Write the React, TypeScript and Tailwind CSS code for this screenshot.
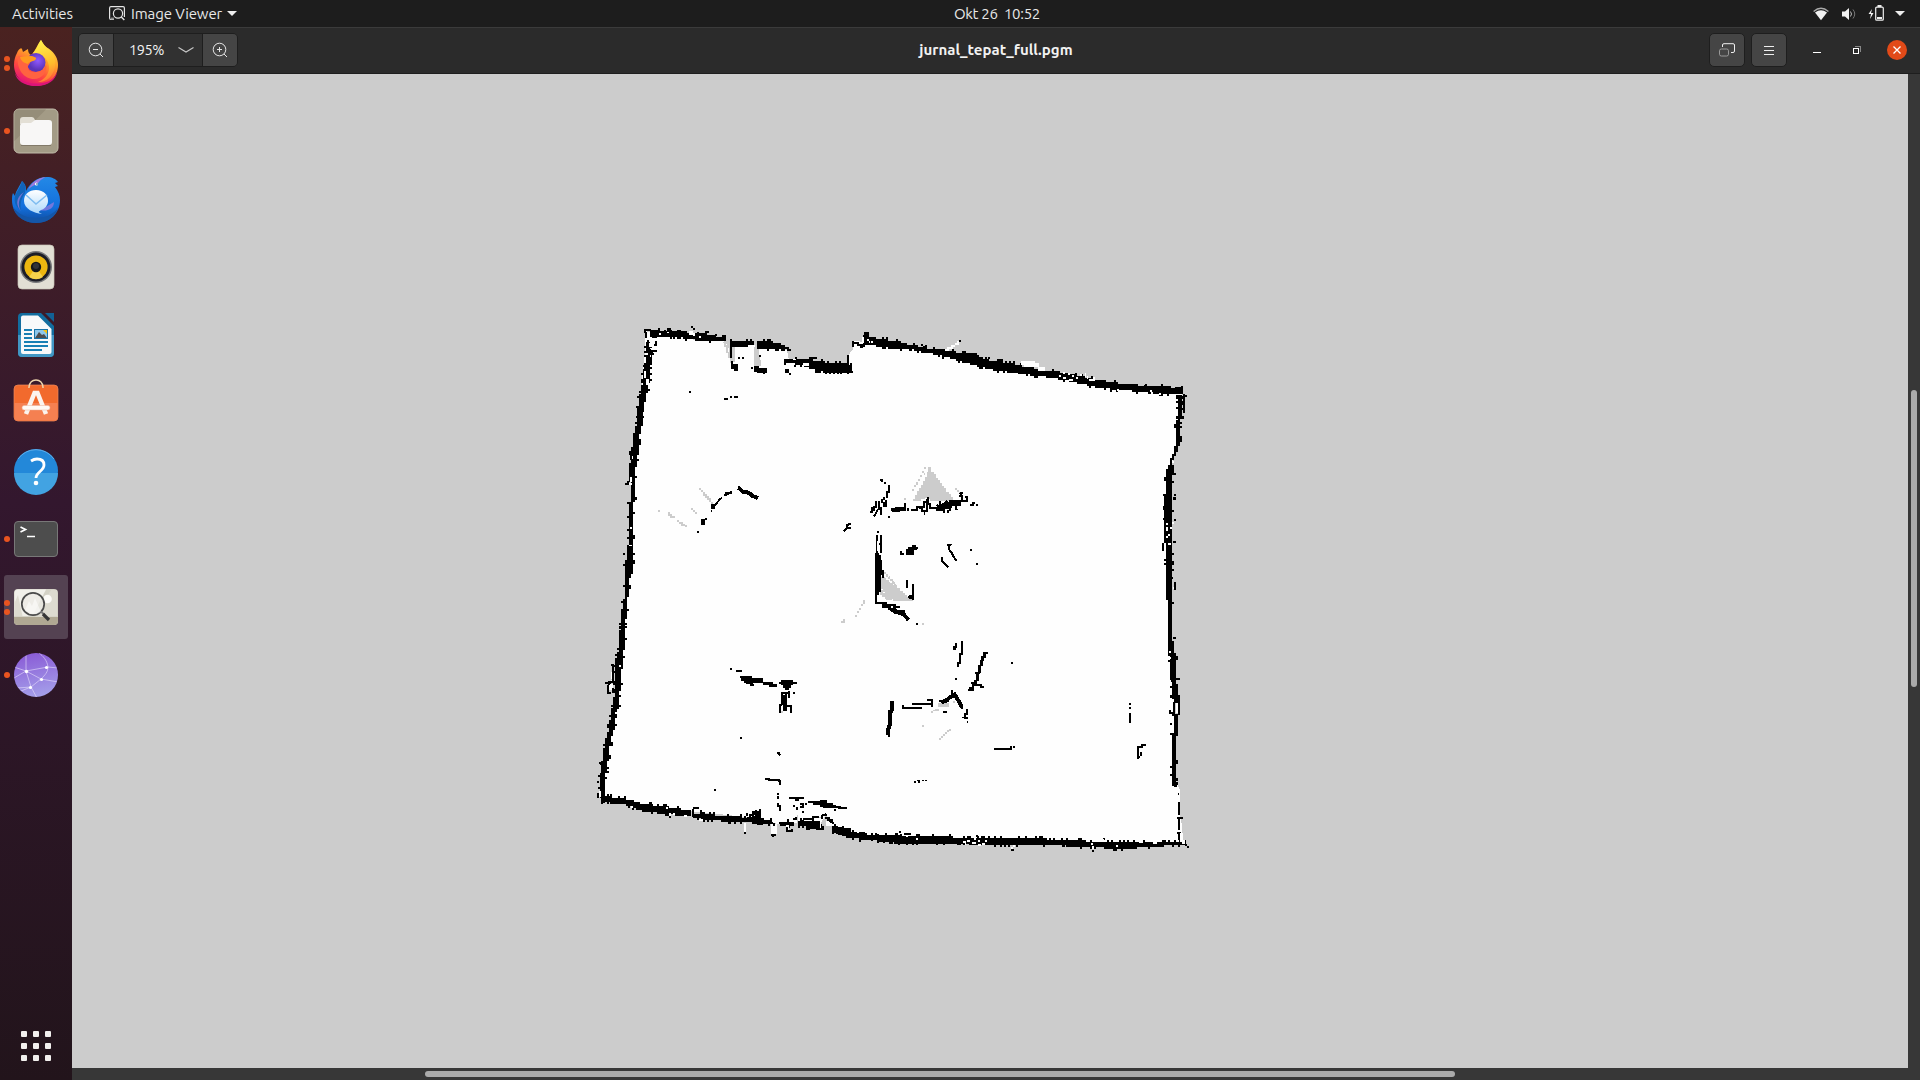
import React from "react";

type Band = number[][];

// Deterministic noise so that the scanned walls keep the same ragged edge.
function noise(n: number) {
  const v = Math.sin(n * 127.1 + 11.7) * 43758.5453;
  return v - Math.floor(v);
}

const CELL = 5.86;

// Each band row is [position, near edge, far edge]; cells are snapped to the occupancy grid.
function bandPath(rows: Band, vertical: boolean, rough = 0.26) {
  let d = "";
  const first = rows[0][0];
  const last = rows[rows.length - 1][0];
  let i = 0;
  for (let p = first; p < last; p += CELL) {
    while (i < rows.length - 2 && p > rows[i + 1][0]) i++;
    const a = rows[i];
    const b = rows[i + 1];
    const t = (p - a[0]) / (b[0] - a[0]);
    let lo = Math.floor((a[1] + (b[1] - a[1]) * t) / CELL + 0.3) * CELL;
    let hi = Math.ceil((a[2] + (b[2] - a[2]) * t) / CELL - 0.3) * CELL;
    const seed = p + first * 3 + a[1];
    if (noise(seed) < rough) lo -= CELL;
    if (noise(seed + 5) < rough) hi += CELL;
    if (hi - lo < CELL) hi = lo + CELL;
    const q = p + CELL + 0.2;
    d += vertical
      ? `M${lo} ${p}H${hi}V${q}H${lo}Z`
      : `M${p} ${lo}H${q}V${hi}H${p}Z`;
  }
  return d;
}

function cells(list: number[][]) {
  return list.map(([x, y, w = 6, h = 6]) => `M${x} ${y}h${w}v${h}h${-w}z`).join("");
}

interface TileProps {
  x: number;
  y: number;
  h?: Band[];
  v?: Band[];
  rough?: number;
  grey?: string;
  greyCells?: number[][];
  white?: number[][];
  black?: number[][];
  line?: string;
  thick?: string;
}

function Tile({ x, y, h = [], v = [], rough, grey, greyCells, white, black, line, thick }: TileProps) {
  return (
    <g transform={`translate(${x} ${y}) scale(0.33333)`} fill="none">
      {grey && <path d={grey} fill="#cccccc" />}
      {greyCells && <path d={cells(greyCells)} fill="#cccccc" />}
      {h.map((b, i) => <path key={`h${i}`} d={bandPath(b, false, rough)} fill="#000" />)}
      {v.map((b, i) => <path key={`v${i}`} d={bandPath(b, true, rough === undefined ? 0.14 : rough)} fill="#000" />)}
      {white && <path d={cells(white)} fill="#fefefe" />}
      {line && <path d={line} stroke="#000" strokeWidth="6" />}
      {thick && <path d={thick} stroke="#000" strokeWidth="12" />}
      {black && <path d={cells(black)} fill="#000" />}
    </g>
  );
}

function OccupancyMap() {
  return (
    <svg viewBox="72 74 1836 994" className="block h-full w-full" shapeRendering="crispEdges">
      <polygon
        fill="#fefefe"
        points="645,331 656,334 696,340 723,341 728,346 732,362 735,362 735,344 755,345 758,364 761,364 758,346 787,350 789,360 813,366 846,366 850,352 853,350 854,341 865,342 945,352 1020,367 1040,374 1110,387 1182,391 1179,430 1172,466 1168,500 1168,560 1170,640 1175,710 1175,780 1180,790 1180,840 1184,843 1000,842 880,837 850,834 836,827 826,815 820,824 800,822 790,824 778,824 745,817 700,812 650,807 602,797 608,740 618,690 628,560 633,480 640,400 645,350"
      />
      <Tile
        x={580} y={310}
        h={[
          [[210, 62, 80], [270, 64, 82], [330, 70, 88], [390, 76, 92], [434, 86, 95]],
          [[450, 96, 114], [480, 92, 108], [520, 98, 106]],
          [[532, 96, 114], [560, 94, 117], [600, 104, 116], [627, 116, 121]],
          [[612, 146, 156], [660, 150, 164], [690, 148, 170], [705, 152, 178], [740, 158, 186], [800, 162, 184], [812, 168, 178]],
          [[848, 82, 102], [875, 88, 106], [900, 88, 104], [960, 98, 114]],
        ]}
        v={[
          [[95, 198, 212], [150, 200, 214], [180, 190, 210], [235, 184, 204], [260, 177, 196], [340, 169, 184], [360, 163, 178], [440, 152, 171], [490, 147, 162], [525, 154, 162], [560, 155, 163], [572, 150, 160], [690, 146, 158], [740, 140, 156], [785, 138, 154]],
        ]}
        grey="M430 95H438V105H444V125H450V140H456V158H450V145H444V130H438V110H432ZM522 110H532V120H538V150H543V168H522Z"
        greyCells={[[356, 534], [362, 540], [368, 546], [368, 552], [374, 552], [374, 558], [380, 558], [380, 564], [386, 564], [386, 570], [392, 576], [392, 582], [234, 600], [264, 606], [264, 612], [270, 612], [270, 618, 14], [292, 630], [298, 636, 12], [304, 642, 12], [316, 646], [332, 594], [338, 600], [344, 606]]}
        white={[[198, 66, 12, 20], [220, 80], [238, 68], [262, 64], [240, 80, 12], [328, 62, 12, 12], [340, 68, 6, 10], [356, 78], [302, 80], [206, 98, 12, 12], [214, 114], [198, 128], [192, 182, 6, 22], [198, 208, 8, 18], [206, 134, 8], [154, 438, 6, 8], [150, 500, 7, 16], [146, 520, 10, 4], [150, 652], [148, 705, 8, 4], [866, 92, 20, 6], [870, 98, 6, 6], [628, 158, 16, 6], [670, 160, 16, 8], [640, 146, 8, 4]]}
        line="M192 60H214M194 60V68M198 66V84M216 82H230M228 94V104H222M230 124H216V132H206V150M204 90V112M192 206V234M454 118V144M456 152V164M400 590L420 568L427 562M432 554H438V548H454V542M444 546V556M820 92V112M820 100H838M830 106H850M840 112H850M904 508V514M912 520H918M926 524V545H920V565M912 560V570M906 566V580M898 572V600M888 572V590H882V604M876 590V610M870 606H876M894 598L882 620M902 590V616M918 570V592M912 576V590M790 664L800 654V646L812 640M800 654H812M894 664V668M892 676V730M904 676V730M892 702H906"
        thick="M858 66V86M400 582V598M476 534L490 546L506 548L518 558L534 564M891 732V780M897 735V780M936 600H960"
        black={[[334, 48], [340, 54], [234, 54], [260, 54, 12, 12], [350, 66], [382, 64], [406, 72], [454, 162, 20, 14], [462, 174, 12, 8], [474, 142], [486, 142], [512, 170], [536, 135], [523, 168, 14, 18], [532, 174, 28, 14], [548, 186, 8], [616, 178, 12, 10], [626, 188], [646, 140], [686, 142, 24, 6], [800, 136, 6, 24], [808, 184, 10], [780, 186], [854, 66, 12, 20], [848, 74], [328, 243], [432, 264, 12], [450, 259], [462, 259, 12], [362, 626, 12, 18], [374, 624], [351, 663], [392, 600, 5], [176, 244], [168, 288], [168, 318], [134, 518, 12], [142, 512, 6], [156, 552, 10], [160, 560, 12], [130, 730], [924, 618], [474, 529], [150, 430, 6, 20]]}
      />
      <Tile
        x={840} y={310}
        h={[
          [[90, 88, 104], [130, 92, 112], [200, 104, 118], [260, 116, 128], [320, 122, 140], [360, 130, 152], [400, 136, 164], [450, 152, 175], [500, 158, 184], [560, 172, 192], [610, 180, 200], [680, 190, 212], [760, 210, 230], [840, 222, 240], [900, 228, 244], [960, 232, 250], [1024, 236, 252]],
        ]}
        v={[
          [[255, 1015, 1022], [310, 1015, 1022], [345, 1010, 1020], [392, 1010, 1019]],
        ]}
        rough={0.2}
        grey="M264 472H274V486H282V492H288V504H294V510H300V520H306V528H312V534H318V545H326V552H332V562H338V574H270V568H264V564H254V568H244V574H218V566H224V556H230V544H236V534H242V524H248V512H254V500H260V486H264Z"
        greyCells={[[252, 472], [246, 484], [252, 490, 4], [234, 508], [240, 496], [228, 516, 5, 8], [222, 524], [216, 536], [192, 564], [344, 534], [350, 540], [358, 546]]}
        white={[[316, 116, 12], [322, 110, 18], [332, 104, 14], [344, 98, 12], [352, 94, 6, 8], [544, 154, 42, 12], [552, 166, 26, 6], [570, 160, 28, 10], [594, 170, 20, 14], [734, 190, 5, 10], [740, 198, 5, 9], [760, 202, 5, 10], [670, 186], [656, 196], [684, 190], [696, 196], [720, 192], [668, 202, 10], [688, 208, 10], [708, 202], [748, 206, 10], [80, 88, 8], [92, 94], [76, 104, 10], [66, 80, 6, 18], [830, 236], [918, 246], [930, 240], [958, 248], [216, 116]]}
        line="M1020 262H1034M1032 252V310M1020 282H1032M1020 296H1034M156 602V596H178M178 590V604M170 596H198M196 580V604M204 594V604M212 600H232V592H246V602H262V566M240 596V590H252V576H264V584M270 580V594H290V600H312V610M290 584L304 594H330V602M300 574L302 588L320 574L326 592L342 580M326 572H366V560L360 548M344 580L350 600M360 574H382V560H376M390 584H400V578H406"
        thick="M305 588H335M328 582H362M292 592H316M312 582H330M166 598H192"
        black={[[244, 102], [228, 104], [250, 108, 10], [358, 90], [380, 128, 26, 8], [444, 142], [508, 154], [654, 184], [792, 212], [870, 222, 20, 8], [912, 224], [984, 228], [1006, 232, 16], [1032, 254, 9], [364, 546], [358, 554, 10], [408, 582], [252, 602, 4, 14], [322, 600, 6, 10], [144, 618], [124, 508, 4, 8], [260, 560, 6, 12], [390, 716], [180, 722, 6, 10], [184, 728, 8], [198, 718, 24, 12], [204, 712, 26], [216, 706, 12], [226, 710, 8], [204, 728, 10]]}
      />
      <Tile
        x={1100} y={440}
        v={[
          [[0, 229, 239], [28, 224, 234], [56, 212, 218]],
          [[75, 204, 219], [135, 199, 218], [215, 194, 218], [295, 195, 216], [310, 199, 215], [400, 199, 215], [460, 201, 215], [485, 205, 215], [600, 206, 218], [620, 208, 224], [680, 211, 226], [725, 216, 230], [785, 222, 234]],
          [[822, 223, 234], [884, 222, 233]],
          [[884, 217, 228], [1035, 217, 228]],
        ]}
        rough={0.08}
        white={[[216, 64, 7, 6], [198, 260, 6, 14], [210, 260, 6, 8], [198, 288], [204, 282], [204, 310, 10], [198, 250, 5], [216, 246], [218, 440], [206, 632], [206, 650], [228, 790, 6, 28], [234, 1046, 7, 22], [238, 1130, 5, 26], [240, 1148, 6, 30], [234, 1078, 4]]}
        line="M222 785V825M237 765V825M230 770H240M210 810V820H218M90 789V795M90 801V807M90 820V849M114 958V922H126V916H137M124 936V948M118 948V954M212 58V75M189 310V332M237 1085V1125M237 1130V1170M232 1135H248M237 1178V1200M230 1180H244M243 1188V1196"
        black={[[222, 98], [222, 162], [218, 172, 10, 8], [222, 238], [220, 302, 8], [216, 340], [216, 370], [214, 410], [222, 426, 6, 24], [198, 474, 12], [210, 486, 12], [218, 590, 10], [204, 614], [204, 660, 12], [220, 654, 14], [226, 714, 14], [212, 720], [210, 850], [210, 879, 14], [228, 1014, 6, 8], [228, 1026, 6, 8], [222, 1036, 10], [234, 1058], [9, 1194]]}
      />
      <Tile
        x={580} y={560}
        h={[
          [[62, 710, 726], [130, 717, 732], [190, 734, 752], [260, 742, 760], [330, 754, 767]],
          [[340, 762, 772], [372, 764, 777], [440, 768, 783], [500, 773, 785], [540, 776, 792], [575, 785, 790]],
          [[600, 784, 794], [640, 784, 794]],
          [[660, 782, 795], [690, 788, 804], [725, 796, 805]],
          [[756, 798, 813], [780, 804, 824], [830, 822, 833], [890, 827, 840], [925, 825, 844], [960, 825, 846]],
        ]}
        v={[
          [[0, 137, 151], [95, 136, 144], [150, 126, 137], [260, 118, 132], [290, 111, 127], [325, 108, 123], [420, 103, 117], [455, 95, 107], [510, 87, 100], [535, 78, 92], [590, 72, 85], [645, 61, 77], [712, 59, 75]],
        ]}
        rough={0.17}
        grey="M904 50H914V60H924V66H930V74H940V84H950V90H960V124H938V118H926V112H920V104H914V96H908V88H902V60Z"
        greyCells={[[910, 36], [918, 42, 5, 9], [924, 52], [930, 58], [936, 64], [942, 72], [906, 106, 18], [914, 112, 22], [848, 120, 6, 12], [843, 132], [837, 144], [831, 153], [825, 165], [783, 182, 12], [789, 177], [597, 453, 12], [650, 765, 4, 30], [714, 772, 10, 36], [706, 786, 8, 16]]}
        white={[[94, 336, 6, 20], [88, 372, 12, 18], [94, 360], [118, 316], [492, 788, 5, 28], [573, 792, 18, 30], [618, 794, 8, 16], [654, 768, 6, 20], [356, 778, 12], [268, 758, 5, 12], [258, 742], [278, 758], [312, 764, 8], [714, 774, 10, 30], [340, 748, 12, 8], [500, 768], [512, 762], [154, 738], [58, 694, 5, 16], [738, 784, 24, 14]]}
        line="M98 312V365H88V375M76 369H92M84 375V398H92M102 362V372M98 385V400M888 0V128H920M902 0V45M908 30V54M910 140H930V146H945M920 134H946M925 148H945V158H960M600 458V436H606M608 400H624M626 392V415M620 438H632V458M592 580H597L600 586M555 657H566V661H596V664H600V674M594 699V705M594 708V716M594 729V742M600 736V752M628 714H672M646 720H656M684 726H740M700 732H760M722 720V740M720 738H736M740 738L758 736L780 744H800M642 734V740M660 732H668V742H660M652 742V750M666 755H672M340 744H356M340 746V768H350M364 770V750M486 780H510V764H520V780M530 764H540V748M500 758V768M528 750V772M598 790H625V778M620 800V814H636V806M608 788H640M640 778H648V772M656 784V800M668 778H700V772H716M728 766L740 762M736 774H748L750 784L762 790M725 766V778M574 826H588M580 828V832M582 790V798M765 812H800V806H812M776 800V824"
        thick="M516 760H536V792M500 776H530V784M530 788H548M668 790H720M680 800H720M936 424V450M930 450V494M762 806H780"
        black={[[484, 348, 32, 16], [480, 348], [492, 360, 32, 8], [498, 366, 20, 6], [516, 354, 34, 16], [548, 366, 30, 9], [566, 372, 26, 9], [598, 366, 53], [602, 360, 38, 16], [608, 374, 26, 10], [614, 383, 14, 6], [603, 406, 18, 30], [598, 434, 6, 12], [608, 436, 13, 17], [604, 396, 5, 8], [614, 402, 6, 6], [450, 323], [468, 329, 18, 6], [510, 372, 12], [639, 396], [480, 531], [402, 686], [918, 504, 6, 20], [924, 524], [94, 312], [118, 188], [116, 200], [86, 464], [70, 552], [70, 564], [56, 606, 12], [52, 662, 6], [52, 700, 6, 14], [66, 724, 10], [156, 744], [268, 768], [382, 778], [394, 778], [492, 816], [576, 822, 12, 6], [654, 798], [942, 846], [910, 842], [666, 754], [676, 730]]}
      />
      <Tile
        x={840} y={540}
        grey="M134 110H128V142H140V154H150V166H162V176H174V184H220V178H208V172H202V166H194V160H188V152H180V144H172V136H158V128H148V120H140ZM120 150H130V160H138V168H148V176H156V180H138V172H130V166H120ZM296 488H326V502H292ZM274 512H298V506H286V510H280V518H274Z"
        greyCells={[[134, 96, 5], [140, 102, 5], [146, 108, 5, 8], [152, 118, 8], [160, 126], [68, 180, 6, 12], [56, 204], [51, 214], [45, 225], [3, 242, 12], [9, 237], [246, 249], [246, 555], [297, 594], [303, 588], [309, 583], [315, 577], [321, 571], [327, 566], [340, 484, 4]]}
        line="M201 120V143M219 132V180M204 172H220M106 188H128L132 194H168M128 192V202H142M150 208H162M160 200H180M322 14H332L326 20L330 34L336 40L342 52L350 62M305 52V62L312 68L318 76L325 82M366 303V342H360V370H354V382M342 330V320H348V310M393 430H400V436H424V441H432M384 450H398V432M216 491H280M188 496V504H246M264 480H280M276 478V500M310 516H320M382 508V522H376V535H384M370 530V534M336 450V468M462 627H512V618M296 482H310"
        thick="M111 40V165M117 45V155M208 172H220M152 208L168 214L192 224L206 240M174 216H194M386 448H396M155 484V512L150 520V552L144 570V584M304 488L318 482L330 472L344 464L354 480L366 502M310 484L326 478"
        white={[[112, 4, 5, 30], [111, 56, 5, 18]]}
        black={[[430, 337, 13], [430, 343, 7, 12], [424, 349, 8, 14], [420, 360, 9, 18], [414, 374, 9, 24], [404, 396, 15, 6], [408, 402, 8, 20], [403, 420, 8, 16], [390, 27], [408, 69], [128, 90, 4, 24], [180, 34, 6, 12], [184, 39, 8], [198, 34, 24, 11], [210, 24, 20], [216, 16, 12], [228, 249], [345, 414], [513, 366], [144, 586], [261, 477], [519, 619], [381, 543, 4], [338, 324, 10], [362, 496, 8, 11]]}
      />
      <Tile
        x={820} y={740}
        h={[
          [[36, 262, 274], [62, 266, 284], [85, 281, 292], [150, 287, 298], [200, 288, 306], [280, 288, 308], [420, 292, 309], [500, 296, 316], [600, 296, 316], [740, 298, 318], [800, 304, 322], [900, 305, 326], [1000, 308, 322], [1040, 308, 317], [1092, 307, 315]],
        ]}
        rough={0.24}
        white={[[258, 284], [274, 282], [288, 294], [428, 302, 10], [442, 300, 8], [456, 306, 12], [462, 294], [474, 300], [486, 308, 10], [474, 312, 8], [496, 300], [434, 310, 5], [574, 320], [580, 314], [816, 318, 5, 10], [848, 296, 5, 9], [812, 308], [958, 302, 12], [1000, 306, 10], [888, 314], [1080, 280, 8, 24], [1086, 300, 8, 12], [1070, 300, 8], [1076, 150, 5, 16]]}
        black={[[252, 278, 20, 6], [228, 278], [238, 274], [468, 284], [484, 288, 12], [816, 330], [574, 326, 8], [1096, 312], [1101, 318], [282, 124, 6, 5], [290, 121, 10, 3], [294, 124, 6, 5], [306, 120, 5, 3], [314, 120, 7, 3], [20, 238, 18], [42, 206]]}
        line="M0 196H24V202H60V204H80M8 226H22M60 266H92"
        thick="M0 186H14V198H28M36 268H72M50 276H92"
      />
    </svg>
  );
}

function FirefoxIcon() {
  return (
    <svg viewBox="0 0 48 48" className="h-12 w-12">
      <defs>
        <linearGradient id="fx" x1=".8" y1="0" x2=".3" y2="1">
          <stop offset="0" stopColor="#ffe94a" /><stop offset=".4" stopColor="#ffa028" />
          <stop offset=".7" stopColor="#ff4a3f" /><stop offset="1" stopColor="#e00c7c" />
        </linearGradient>
        <linearGradient id="fy" x1=".5" y1="0" x2=".7" y2="1">
          <stop offset="0" stopColor="#fff04a" /><stop offset=".6" stopColor="#ffbb2c" /><stop offset="1" stopColor="#ff7139" />
        </linearGradient>
        <radialGradient id="fp" cx=".6" cy=".4"><stop offset="0" stopColor="#9059ff" /><stop offset="1" stopColor="#5a34b8" /></radialGradient>
      </defs>
      <path d="M5 14C6 11 9 8 10 10l1 3 5-3c0 3 1 5 3 6 4-3 6-10 10-15 2 3 4 7 8 9 6 4 9 10 9 16 0 12-9 21-22 21S2 37 2 26c0-5 1-8 3-12z" fill="url(#fx)" />
      <path d="M29 1c2 4 4 7 8 9l3 4c5 7 4 17-1 23-3 4-8 6-13 6 11-4 14-15 8-23-4-5-12-5-13-6 4-4 5-9 8-13z" fill="url(#fy)" />
      <circle cx="24" cy="23.500" r="9.500" fill="url(#fp)" />
      <path d="M6 17l11 2c3 3 1 5-1 8-1 4 3 7 8 6 5 0 9-3 10-8 2 8-4 15-12 15-10 0-18-10-16-23z" fill="#ff6340" />
      <path d="M8 18l10-1c4 0 7 2 6 3-2 3-7 2-8 5-4-1-7-3-8-7z" fill="#ff9a1f" />
      <path d="M3 34c4 8 12 10.500 21 10.500s18-2.500 21-11.500c-1 8-9 14-21 14S4 41 3 34z" fill="#dc1479" />
    </svg>
  );
}

function FilesIcon() {
  return (
    <svg viewBox="0 0 48 48" className="h-12 w-12">
      <rect x="2" y="2" width="44" height="44" rx="5" fill="#a39b86" stroke="#c0bba9" strokeWidth="1" />
      <path d="M2.500 34L34 2.500H7Q2.500 2.500 2.500 7z" fill="#958d79" />
      <path d="M8 13q0-3 3-3h9q2 0 3 3l1 4H8z" fill="#e3dfd5" />
      <path d="M8 19q0-3 3-3h8l4-3h14q3 0 3 3v19q0 3-3 3H11q-3 0-3-3z" fill="#f8f7f6" />
      <path d="M9 38.500H39" stroke="#827a69" strokeWidth="1" />
    </svg>
  );
}

function ThunderbirdIcon() {
  return (
    <svg viewBox="0 0 48 48" className="h-12 w-12">
      <defs>
        <linearGradient id="tb" x1=".5" y1="0" x2=".5" y2="1"><stop offset="0" stopColor="#2489e6" /><stop offset=".65" stopColor="#126fdc" /><stop offset="1" stopColor="#114c9e" /></linearGradient>
        <linearGradient id="te" x1=".5" y1="0" x2=".5" y2="1"><stop offset="0" stopColor="#fff" /><stop offset="1" stopColor="#acd8fb" /></linearGradient>
      </defs>
      <path d="M10 6c4 4 4 6 4 10 4-8 11-14 21-14 5 0 9 2 11 5l-3 1 3 3-3 1c3 4 5 8 5 13 0 13-10 23-24 23S0 38 0 25c0-2 0-5 1-7l2 3C4 15 8 11 10 6z" fill="url(#tb)" />
      <path d="M10 6c4 4 4 7 3 12-4 6-5 11-4 17C3 32 2 26 3 21c2-5 6-10 7-15z" fill="#1163b8" />
      <path d="M16 15C19 8 25 3 34 2c-4 2-6 3-7 5-2 3-7 3-11 8z" fill="#9d7bdf" />
      <path d="M12 17c-5 6-7 13-3 19-5-5-6-13 3-19z" fill="#9a7ae0" opacity=".7" />
      <path d="M1 32c6 8 14 11 23 11 8 0 17-3 22-10-3 10-12 15-22 15S3 42 1 32z" fill="#1456a8" />
      <path d="M42 27c0 7-7 10-15 8l5-2z" fill="#7278dc" />
      <circle cx="24.500" cy="9" r="1.600" fill="#fff" /><circle cx="25" cy="9" r=".8" fill="#154a80" />
      <path d="M24 15c8 0 12 5 12 11 0 4-3 8-7 9-3 2-3 2 1 4-8-1-18-5-18-13 0-7 5-11 12-11z" fill="url(#te)" />
      <path d="M14 20l10 9 11-9" fill="none" stroke="#7ebcf0" strokeWidth="1.500" />
    </svg>
  );
}

function RhythmboxIcon() {
  return (
    <svg viewBox="0 0 48 48" className="h-12 w-12">
      <rect x="6" y="2" width="36" height="44" rx="4" fill="#e2dfd4" stroke="#c9c5b8" strokeWidth=".7" />
      <circle cx="24" cy="24" r="16" fill="#77787a" /><circle cx="24" cy="24" r="14.500" fill="#1c1d26" />
      <circle cx="24" cy="24" r="11.600" fill="#ecb610" /><path d="M24 24L17 34a12 12 0 0 0 14 0z" fill="#f5d14b" />
      <circle cx="24" cy="24" r="5.200" fill="#15161a" /><circle cx="24" cy="23" r="3" fill="#303238" />
    </svg>
  );
}

function WriterIcon() {
  return (
    <svg viewBox="0 0 48 48" className="h-12 w-12">
      <path d="M10 2h19l13 13v27q0 4-4 4H10q-4 0-4-4V6q0-4 4-4z" fill="#126d9f" />
      <path d="M6 24H42V42q0 4-4 4H10q-4 0-4-4z" fill="#4197c4" />
      <path d="M33 2h9v9z" fill="#126195" />
      <path d="M11 4.500H26L39.500 18V41q0 2-2 2H11q-2 0-2-2V6.500q0-2 2-2z" fill="#f8f9fa" />
      <path d="M12 19h8M12 23h8M12 27h8M12 31h24M12 35h24M12 39h18" stroke="#187fb4" strokeWidth="2" />
      <rect x="22.500" y="18.500" width="13" height="9" fill="#8dc7ec" stroke="#1873a8" />
      <path d="M23 27l4-6 3 3 2-1 3 4z" fill="#4c4d4f" /><path d="M31 19h4v4z" fill="#f5c211" />
    </svg>
  );
}

function SoftwareIcon() {
  return (
    <svg viewBox="0 4 48 48" className="h-12 w-12">
      <rect x="2" y="10" width="44" height="36" rx="4" fill="#f26a2d" stroke="#ef895c" strokeWidth=".7" />
      <path d="M2.500 28h43v14q0 3.500-3.500 3.500H6q-3.500 0-3.500-3.500z" fill="#f58051" />
      <path d="M17 13v-1q1-7 7-7t7 7v1" stroke="#efd6ad" strokeWidth="1.500" fill="none" />
      <path d="M14 39l8.500-21h3L34 39" fill="none" stroke="#fbf4ef" strokeWidth="4.500" />
      <rect x="10" y="30.500" width="28" height="4.500" rx="2.200" fill="#fffaf6" stroke="#e9b39b" strokeWidth=".5" />
    </svg>
  );
}

function HelpIcon() {
  return (
    <svg viewBox="0 0 48 48" className="h-12 w-12">
      <circle cx="24" cy="24" r="22" fill="#2388d9" /><path d="M2 26a22 22 0 0 0 44 0z" fill="#42a3e2" />
      <path d="M6 12a22 22 0 0 1 36 0" fill="none" stroke="#6db9f0" strokeWidth=".8" />
      <path d="M19 14q3-2 6-2 7 0 7 6 0 3-4 6.500-4 3.500-4 6.500" fill="none" stroke="#fff" strokeWidth="2.800" />
      <circle cx="24" cy="36" r="2.300" fill="#fff" />
    </svg>
  );
}

function TerminalIcon() {
  return (
    <svg viewBox="0 0 48 48" className="h-12 w-12">
      <rect x="2.500" y="6.500" width="43" height="35" rx="3.500" fill="#4d4d4d" stroke="#787878" />
      <path d="M8.500 12l5 2.500-5 2.500" fill="none" stroke="#fff" strokeWidth="1.700" /><path d="M15 21.500h8" stroke="#fff" strokeWidth="1.500" />
    </svg>
  );
}

function ViewerIcon() {
  return (
    <svg viewBox="0 0 48 48" className="h-12 w-12">
      <rect x="2" y="6" width="44" height="36" rx="4" fill="#d4d2c6" />
      <path d="M2.500 33h18L34 6.500H6q-3.500 0-3.500 3.500z" fill="#f1f0ea" />
      <path d="M6 12L2.500 20V33h8zM23 34l16-27h6v26z" fill="#dddbd0" />
      <path d="M2 34h44v4q0 4-4 4H6q-4 0-4-4z" fill="#b0a893" />
      <circle cx="35.500" cy="16" r="4.300" fill="#fcfbf8" />
      <circle cx="21" cy="21" r="11.200" fill="#ecebe5" fillOpacity=".75" stroke="#4b4b4b" strokeWidth="1.700" />
      <path d="M13 27l4-9 3 5 3-8 6 14q-8 5-16-2z" fill="#fff" opacity=".5" />
      <path d="M29 28.500l3 3" stroke="#777" strokeWidth="2" /><path d="M31 31l6 6" stroke="#353535" strokeWidth="3.200" />
    </svg>
  );
}

function WebIcon() {
  return (
    <svg viewBox="0 0 48 48" className="h-12 w-12">
      <defs><linearGradient id="wg" x1=".4" y1="0" x2=".6" y2="1"><stop offset="0" stopColor="#8a5cd6" /><stop offset="1" stopColor="#a5a0ea" /></linearGradient>
        <clipPath id="wc"><circle cx="24" cy="24" r="22" /></clipPath></defs>
      <circle cx="24" cy="24" r="22" fill="url(#wg)" />
      <g clipPath="url(#wc)" fill="none" stroke="#e4dbfa" strokeWidth=".7" opacity=".9">
        <path d="M2 16l12 4 15 8 17 3M14 20V3M14 20l5 16-10 4M14 20L36 16l10 1M36 16c0 5-3 8-7 12l-10 8 6 11M36 16C35 9 31 5 27 2M14 20L2 27M19 36L5 37" />
      </g>
      <g fill="#fff"><circle cx="14.500" cy="20.500" r="1.700" /><circle cx="34.500" cy="16.500" r="1.600" /><circle cx="29.500" cy="28.500" r="1.600" /><circle cx="18.500" cy="36.500" r="1.600" /></g>
    </svg>
  );
}

const dock = [
  { name: "Firefox", icon: FirefoxIcon, windows: 2 },
  { name: "Files", icon: FilesIcon, windows: 1 },
  { name: "Thunderbird", icon: ThunderbirdIcon, windows: 0 },
  { name: "Rhythmbox", icon: RhythmboxIcon, windows: 0 },
  { name: "Writer", icon: WriterIcon, windows: 0 },
  { name: "Software", icon: SoftwareIcon, windows: 0 },
  { name: "Help", icon: HelpIcon, windows: 0 },
  { name: "Terminal", icon: TerminalIcon, windows: 1 },
  { name: "Image Viewer", icon: ViewerIcon, windows: 2, active: true },
  { name: "Web", icon: WebIcon, windows: 1 },
];

function TopBar() {
  return (
    <header className="grid h-[27px] shrink-0 grid-cols-[1fr_auto_1fr] items-center bg-[#1d1d1d] text-[15px] leading-5 text-[#e8e8e8]">
      <div className="flex items-center pl-3">
        <span className="w-[63px] whitespace-nowrap tracking-[-0.05px]">Activities</span>
        <svg viewBox="0 0 16 15" className="ml-[34px] h-[15px] w-4" fill="none" stroke="#e4e4e4">
          <path d="M5 13.500H2Q.6 13.500.6 12V2Q.6.7 2 .7H14Q15.400.7 15.400 2v9" strokeWidth="1.200" /><circle cx="9" cy="7.500" r="4.600" strokeWidth="1.200" /><path d="M12.300 11l3 3" strokeWidth="1.400" /><path d="M2 11.500h3v2H2z" fill="#888" stroke="none" />
        </svg>
        <span className="ml-[6px] w-[91px] whitespace-nowrap tracking-[-0.1px]">Image Viewer</span>
        <svg viewBox="0 0 10 5" className="ml-[5px] h-[5px] w-[10px]"><path d="M0 0h10L5 5z" fill="#eee" /></svg>
      </div>
      <div className="w-[162px] whitespace-pre pl-[74px] text-center tracking-[-0.3px]">Okt 26  10:52</div>
      <div className="flex items-center justify-end pr-[15px]">
        <svg viewBox="0 0 16 14" className="h-[14px] w-4"><path d="M.6 4.500Q8-2 15.400 4.500" fill="none" stroke="#aaa" strokeWidth="1.300" /><path d="M2 5.500Q8 .8 14 5.500L8 13.300z" fill="#f2f2f2" /></svg>
        <svg viewBox="0 0 16 14" className="ml-3 h-[14px] w-4"><path d="M1 4.500h3L8 1v12L4 9.500H1z" fill="#f2f2f2" /><path d="M9.500 4.500q2 2.500 0 5" fill="none" stroke="#bbb" /><path d="M12 2.500q3.500 4.500 0 9" fill="none" stroke="#777" /></svg>
        <svg viewBox="0 0 16 16" className="mb-[2px] ml-[11px] h-4 w-4"><path d="M4 4L.5 9H3l-1 5 3.500-6H3z" fill="#f2f2f2" /><rect x="7.700" y="2.200" width="7.600" height="13" rx="1" fill="none" stroke="#eee" strokeWidth="1.200" /><path d="M9.500 1h4M9 13h5" stroke="#eee" strokeWidth="1.800" /></svg>
        <svg viewBox="0 0 10 5" className="ml-[11px] h-[5px] w-[10px]"><path d="M0 0h10L5 5z" fill="#eee" /></svg>
      </div>
    </header>
  );
}

function Dock() {
  return (
    <nav className="flex w-[72px] shrink-0 flex-col items-center justify-between bg-linear-to-b from-[#4a2220] via-[#33172e] via-45% to-[#22141b] pt-[4px]">
      <div className="flex flex-col gap-1">
        {dock.map(({ name, icon: Icon, windows, active }) => (
          <div key={name} className={active ? "relative flex h-16 w-16 items-center justify-center rounded-[3px] bg-[#544252]" : "relative flex h-16 w-16 items-center justify-center"}>
            <div className="absolute left-0 flex flex-col gap-[3px]">
              {Array.from({ length: windows }, (_, i) => <span key={i} className="h-[6px] w-[6px] rounded-full bg-[#e95420]" />)}
            </div>
            <Icon />
          </div>
        ))}
      </div>
      <div className="mb-[19px] grid grid-cols-3 gap-[6px]">
        {Array.from({ length: 9 }, (_, i) => <span key={i} className="h-[6px] w-[6px] rounded-[1px] bg-[#f2f0ee]" />)}
      </div>
    </nav>
  );
}

function Zoom({ plus }: { plus?: boolean }) {
  return (
    <svg viewBox="0 0 16 16" className="h-4 w-4" fill="none" stroke="#e6e6e6" strokeWidth="1">
      <circle cx="7.500" cy="7.500" r="6.300" /><path d="M12 12l3 3M5 7.500h5" />{plus && <path d="M7.500 5v5" />}
    </svg>
  );
}

function HeaderBar() {
  return (
    <div className="grid h-[47px] shrink-0 grid-cols-[1fr_auto_1fr] items-center border-b border-t border-b-[#1e1e1e] border-t-[#3b3b3b] bg-[#2b2b2b] pb-px text-[#f2f2f2]">
      <div className="ml-[6px] flex h-[34px] w-[160px] overflow-hidden rounded-[5px] border border-[#1e1e1e]">
        <div className="flex w-[34px] items-center justify-center bg-[#454545]"><Zoom /></div>
        <div className="flex w-[90px] items-center border-x border-[#1e1e1e] bg-[#313131]">
          <span className="ml-[15px] w-[36px] whitespace-nowrap text-[14.5px] leading-5 tracking-[-0.4px]">195%</span>
          <svg viewBox="0 0 16 6" className="ml-[13px] h-[6px] w-4" fill="none" stroke="#c8c8c8" strokeWidth="1.100"><path d="M.5.5L8 5 15.500.5" /></svg>
        </div>
        <div className="flex w-[34px] items-center justify-center bg-[#454545]"><Zoom plus /></div>
      </div>
      <div className="w-[156px] whitespace-nowrap text-center text-[15px] font-bold leading-5 tracking-[0.03px]">jurnal_tepat_full.pgm</div>
      <div className="flex items-center justify-end pr-[13px]">
        <div className="flex h-[34px] w-9 items-center justify-center rounded-[5px] border border-[#1e1e1e] bg-[#454545]">
          <svg viewBox="0 0 16 14" className="h-[14px] w-4" fill="none"><path d="M3.500 4V2Q3.500.7 5 .7h9Q15.500.7 15.500 2v6q0 1.500-1.500 1.500h-2" stroke="#eee" /><rect x=".5" y="6" width="9" height="7" rx="1.800" stroke="#999" /></svg>
        </div>
        <div className="ml-[6px] flex h-[34px] w-9 items-center justify-center rounded-[5px] border border-[#1e1e1e] bg-[#454545]">
          <div className="flex w-[10px] flex-col gap-[3px]"><i className="h-px bg-[#eee]" /><i className="h-px bg-[#eee]" /><i className="h-px bg-[#eee]" /></div>
        </div>
        <i className="ml-[26px] mt-[5px] h-px w-2 bg-white" />
        <svg viewBox="0 0 8 8" className="ml-8 h-2 w-2" fill="none" shapeRendering="crispEdges"><path d="M2 .5h5.500V6" stroke="#888" /><rect x=".5" y="2.500" width="5" height="5" stroke="#fff" /></svg>
        <div className="ml-[26px] flex h-5 w-5 items-center justify-center rounded-full bg-[#e24a18]">
          <svg viewBox="0 0 8 8" className="h-2 w-2" stroke="#fff" strokeWidth="1.300"><path d="M.5.5l7 7M7.500.5l-7 7" /></svg>
        </div>
      </div>
    </div>
  );
}

export default function App() {
  return (
    <div className="flex h-[1080px] w-[1920px] flex-col overflow-hidden font-['Ubuntu','Noto_Sans',sans-serif]">
      <TopBar />
      <div className="flex min-h-0 flex-1">
        <Dock />
        <main className="flex min-w-0 flex-1 flex-col">
          <HeaderBar />
          <div className="grid min-h-0 flex-1 grid-cols-[1fr_12px] grid-rows-[1fr_12px] bg-[#373737]">
            <div className="min-h-0 bg-[#cccccc]"><OccupancyMap /></div>
            <div className="flex justify-center"><div className="mt-[316px] h-[297px] w-[6px] rounded-full bg-[#aaaaaa]" /></div>
            <div className="flex items-center"><div className="ml-[353px] h-[6px] w-[1030px] rounded-full bg-[#aaaaaa]" /></div>
          </div>
        </main>
      </div>
    </div>
  );
}
